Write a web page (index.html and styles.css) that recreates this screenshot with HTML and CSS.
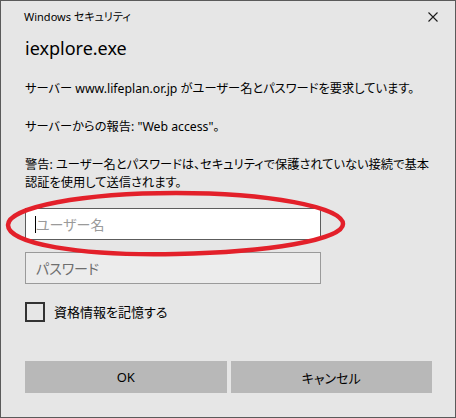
FILE: index.html
```html
<!DOCTYPE html>
<html lang="ja">
<head>
<meta charset="utf-8">
<title>Windows セキュリティ</title>
<link rel="stylesheet" href="styles.css">
</head>
<body>
<div class="window">
  <div class="titlebar">
    <span class="title">Windows セキュリティ</span>
    <svg class="close" width="10" height="10" viewBox="0 0 10 10"><path d="M0.5 0.5 L9.5 9.5 M9.5 0.5 L0.5 9.5" stroke="#1a1a1a" stroke-width="1.1" fill="none"/></svg>
  </div>
  <div class="content">
    <h1 class="app">iexplore.exe</h1>
    <p class="msg">サーバー www.lifeplan.or.jp がユーザー名とパスワードを要求しています。</p>
    <p class="msg">サーバーからの報告: "Web access"。</p>
    <p class="msg">警告: ユーザー名とパスワードは、セキュリティで保護されていない接続で基本認証を使用して送信されます。</p>
    <div class="field user">
      <input type="text" placeholder="ユーザー名">
      <span class="caret"></span>
    </div>
    <div class="field pass">
      <input type="password" placeholder="パスワード">
    </div>
    <label class="remember">
      <span class="box"></span>
      <span class="label">資格情報を記憶する</span>
    </label>
  </div>
  <div class="buttons">
    <button class="btn">OK</button>
    <button class="btn">キャンセル</button>
  </div>
  <svg class="mark" width="456" height="418" viewBox="0 0 456 418">
    <path d="M8 225 C8 207 83 193 176 193 C268 193 343 207 343 224 C343 240 268 252 176 254 C80 256 8 244 8 225 Z" fill="none" stroke="#e3202a" stroke-width="4.5"/>
  </svg>
</div>
</body>
</html>
```

FILE: styles.css
```css
* { box-sizing: border-box; }
html, body { margin: 0; padding: 0; }
body {
  width: 456px;
  height: 418px;
  font-family: "Noto Sans", "Noto Sans CJK JP", sans-serif;
  font-feature-settings: "palt";
  color: #000;
  background: #e6e6e6;
}
.window {
  position: relative;
  width: 456px;
  height: 418px;
  border: 1px solid #5a5a5a;
  background: #e6e6e6;
  display: flex;
  flex-direction: column;
}
.titlebar {
  display: flex;
  align-items: flex-start;
  justify-content: space-between;
  padding: 8px 17px 0 23px;
  height: 32px;
}
.title {
  font-size: 11px;
  line-height: 16px;
}
.close { display: block; margin-top: 3px; }
.content {
  padding: 0 24px 0 24px;
  display: flex;
  flex-direction: column;
  align-items: flex-start;
}
.app {
  margin: 3px 0 20px 0;
  font-size: 18px;
  font-weight: normal;
  line-height: 24px;
}
.msg {
  margin: 0 0 20px 0;
  font-size: 12.25px;
  line-height: 18px;
}
.msg:last-of-type { margin-bottom: 16px; }
.field {
  position: relative;
  width: 296px;
  height: 32px;
}
.field input {
  width: 100%;
  height: 100%;
  margin: 0;
  padding: 0 10px;
  font-family: "Noto Sans", "Noto Sans CJK JP", sans-serif;
  font-feature-settings: "palt";
  font-size: 14px;
  outline: none;
}
.user input {
  border: 1px solid #5c5c5c;
  background: #fff;
}
.user input::placeholder { color: #9a9a9a; }
.pass { margin-top: 12px; }
.pass input {
  border: 1px solid #9a9a9a;
  background: #ececec;
}
.pass input::placeholder { color: #6e6e6e; }
.caret {
  position: absolute;
  left: 10px;
  top: 8px;
  width: 1px;
  height: 17px;
  background: #000;
}
.remember {
  margin-top: 18px;
  display: flex;
  align-items: center;
  gap: 9px;
}
.box {
  width: 20px;
  height: 20px;
  border: 2px solid #333;
}
.label {
  font-size: 13px;
  line-height: 20px;
}
.buttons {
  margin-top: auto;
  padding: 0 23px 24px 24px;
  display: grid;
  grid-template-columns: 1fr 1fr;
  gap: 4px;
}
.btn {
  height: 32px;
  border: none;
  margin: 0;
  background: #b8b8b8;
  font-family: "Noto Sans", "Noto Sans CJK JP", sans-serif;
  font-feature-settings: "palt";
  font-size: 13px;
  color: #000;
}
.mark {
  position: absolute;
  left: -1px;
  top: -1px;
  pointer-events: none;
}
```
